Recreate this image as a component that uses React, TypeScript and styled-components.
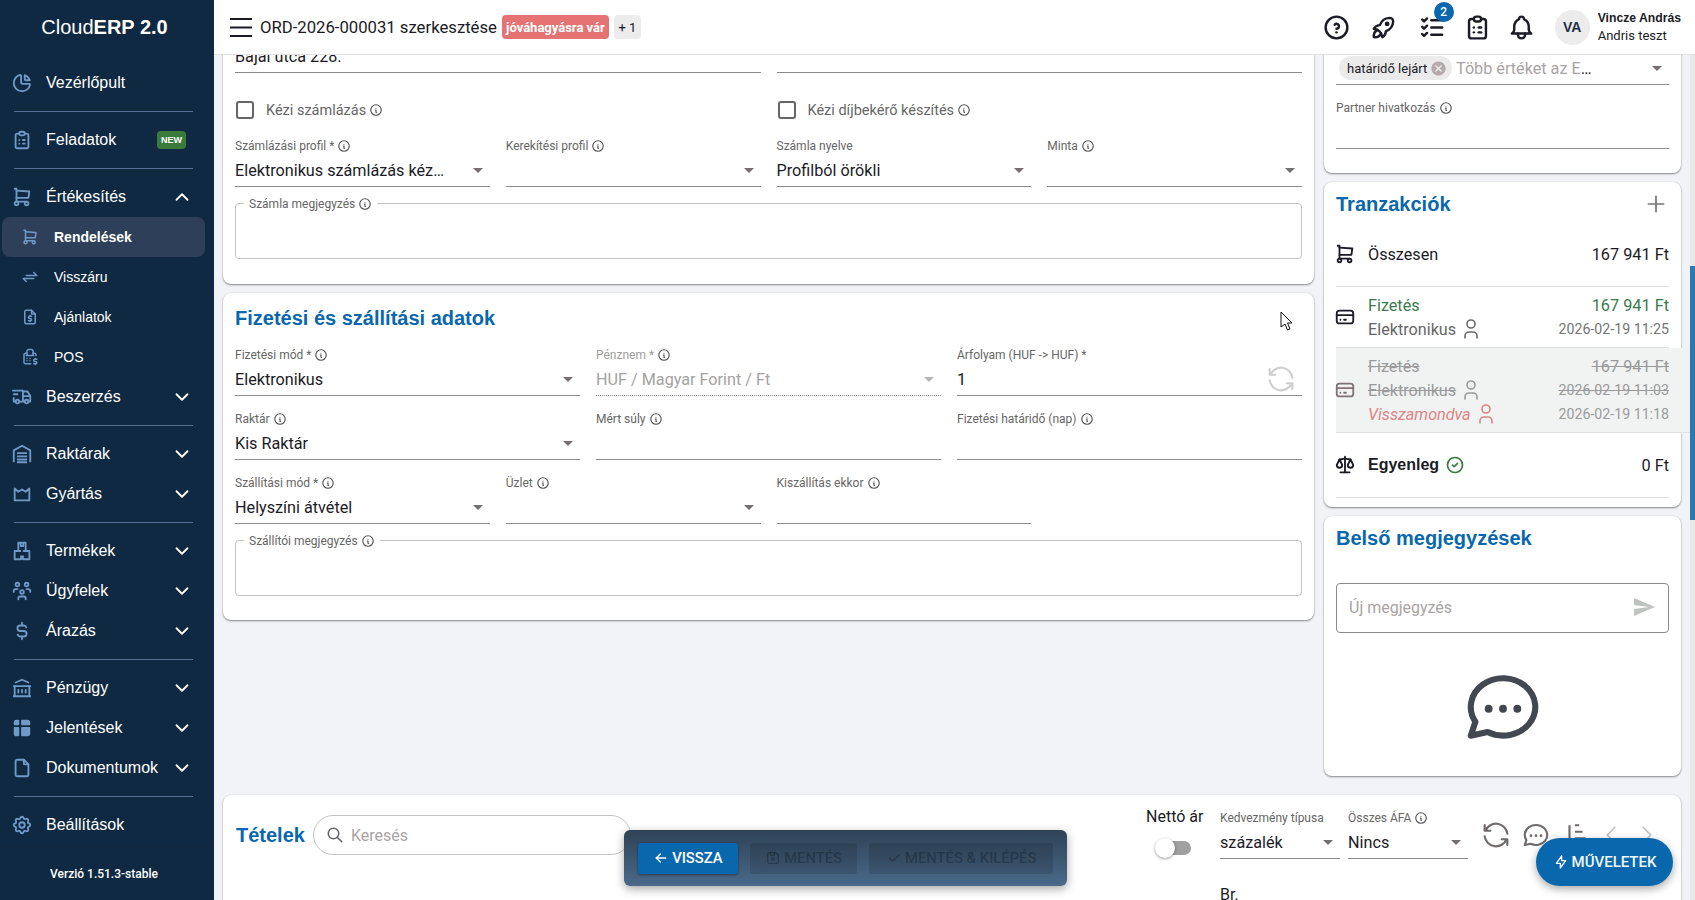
import React from 'react';
import styled, { createGlobalStyle } from 'styled-components';
import {
  TbArrowLeft,
  TbArrowsExchange,
  TbBell,
  TbBolt,
  TbBuildingBank,
  TbCashRegister,
  TbChartPie,
  TbCheck,
  TbChevronDown,
  TbChevronLeft,
  TbChevronRight,
  TbChevronUp,
  TbCircleCheck,
  TbClipboardList,
  TbCreditCard,
  TbCurrencyDollar,
  TbDeviceFloppy,
  TbFile,
  TbFileDollar,
  TbHelpCircle,
  TbInfoCircle,
  TbListCheck,
  TbPlus,
  TbRefresh,
  TbRocket,
  TbScale,
  TbSearch,
  TbSettings,
  TbShoppingCart,
  TbTableFilled,
  TbTruckDelivery,
  TbUser,
  TbUsersGroup,
} from 'react-icons/tb';

const blue = '#0867ad';
const arial = '"Liberation Sans", Arial, sans-serif';
const roboto = 'Roboto, "Liberation Sans", sans-serif';

const GlobalStyle = createGlobalStyle`
  html, body {
    margin: 0;
    height: 100%;
    overflow: hidden;
    background: #f1f3f7;
    font-family: ${roboto};
    color: #1b1b26;
  }
  * { box-sizing: border-box; }
`;

const Shell = styled.div`
  display: flex;
  width: 1695px;
  height: 900px;
  overflow: hidden;
  position: relative;
`;

/* sidebar */
const Sidebar = styled.aside`
  width: 214px;
  flex: none;
  background: #0f2942;
  color: #fff;
  font-family: ${arial};
  display: flex;
  flex-direction: column;
`;

const Logo = styled.div`
  height: 55px;
  flex: none;
  display: flex;
  align-items: center;
  justify-content: center;
  font-size: 20px;
  padding-right: 5px;
  b { font-weight: 700; }
`;

const Nav = styled.nav`
  padding-top: 8px;
  display: flex;
  flex-direction: column;
`;

const NavItem = styled.div`
  height: 40px;
  display: flex;
  align-items: center;
  padding: 0 21px 0 11px;
  font-size: 16px;
  svg:first-child {
    width: 22px;
    height: 22px;
    color: #7199c6;
    margin-right: 13px;
    flex: none;
  }
`;

const Chevron = styled.span`
  margin-left: auto;
  display: flex;
  svg:first-child {
    margin: 0;
    color: #fff;
  }
`;

const SubItem = styled.div<{ $active?: boolean }>`
  height: 40px;
  margin: 0 9px 0 2px;
  display: flex;
  align-items: center;
  padding-left: 19px;
  font-size: 14px;
  border-radius: 8px;
  font-weight: ${(p) => (p.$active ? 700 : 400)};
  background: ${(p) => (p.$active ? '#2e4059' : 'transparent')};
  svg {
    width: 18px;
    height: 18px;
    color: #7199c6;
    margin-right: 15px;
  }
`;

const NavDivider = styled.div`
  height: 1px;
  margin: 8px 21px 8px 14px;
  background: #566f95;
`;

const NewBadge = styled.span`
  margin-left: auto;
  margin-right: 7px;
  width: 29px;
  height: 18px;
  border-radius: 4px;
  background: #3a7b3d;
  font-size: 9px;
  font-weight: 700;
  display: flex;
  align-items: center;
  justify-content: center;
`;

const Version = styled.div`
  margin-top: auto;
  height: 53px;
  flex: none;
  border-top: 1px solid #11273e;
  font-family: ${roboto};
  font-size: 12px;
  font-weight: 500;
  display: flex;
  align-items: center;
  justify-content: center;
  padding-right: 6px;
`;

/* header */
const Main = styled.div`
  flex: 1;
  min-width: 0;
  display: flex;
  flex-direction: column;
`;

const Header = styled.header`
  height: 55px;
  flex: none;
  background: #fff;
  border-bottom: 1px solid #e2e2e2;
  display: flex;
  align-items: center;
  padding: 0 14px 0 16px;
  position: relative;
  z-index: 2;
`;

const PageTitle = styled.div`
  font-size: 16.7px;
  margin-left: 8px;
  white-space: nowrap;
`;

const StatusBadge = styled.span`
  margin-left: 5px;
  height: 24px;
  width: 107px;
  border-radius: 4px;
  background: #e57373;
  color: #fff;
  font-size: 13px;
  font-weight: 700;
  white-space: nowrap;
  display: flex;
  align-items: center;
  justify-content: center;
`;

const MoreBadge = styled.span`
  margin-left: 5px;
  height: 24px;
  width: 27px;
  border-radius: 4px;
  background: #ececec;
  font-size: 13px;
  display: flex;
  align-items: center;
  justify-content: center;
`;

const HeaderActions = styled.div`
  margin-left: auto;
  display: flex;
  align-items: center;
`;

const HeaderIcon = styled.div<{ $gap: number }>`
  position: relative;
  width: 26px;
  height: 26px;
  margin-left: ${(p) => p.$gap}px;
  svg {
    width: 29px;
    height: 29px;
    margin: -1.5px;
    color: #1b1b26;
    display: block;
  }
`;

const CountBadge = styled.span`
  position: absolute;
  top: -12px;
  right: -8px;
  width: 20px;
  height: 20px;
  border-radius: 50%;
  background: ${blue};
  color: #fff;
  font-size: 12px;
  font-weight: 500;
  display: flex;
  align-items: center;
  justify-content: center;
`;

const Avatar = styled.div`
  width: 35px;
  height: 35px;
  margin: 0 8px 0 20px;
  border-radius: 50%;
  background: #ececec;
  color: #1f3147;
  font-family: ${arial};
  font-size: 14px;
  font-weight: 700;
  display: flex;
  align-items: center;
  justify-content: center;
`;

const UserName = styled.div`
  font-family: ${arial};
  font-size: 12.2px;
  font-weight: 700;
  line-height: 18px;
  white-space: nowrap;
`;

const UserSub = styled.div`
  font-size: 13px;
  line-height: 18px;
  white-space: nowrap;
`;

/* content */
const Scroller = styled.div`
  flex: 1;
  min-height: 0;
  overflow: hidden;
  position: relative;
  padding: 0 14px 0 9px;
`;

const ScrollTrack = styled.div`
  position: absolute;
  top: 0;
  right: 0;
  bottom: 0;
  width: 5px;
  background: #e8e8e8;
`;

const ScrollThumb = styled.div`
  position: absolute;
  top: 211px;
  left: 0;
  width: 5px;
  height: 254px;
  background: #2e78b0;
`;

const Columns = styled.div`
  display: grid;
  grid-template-columns: 1091px 357px;
  column-gap: 10px;
  align-items: start;
  margin-top: -31px;
  height: 771px;
`;

const Column = styled.div<{ $gap: number }>`
  display: flex;
  flex-direction: column;
  gap: ${(p) => p.$gap}px;
`;

const Card = styled.section<{ $pad?: string }>`
  background: #fff;
  border-radius: 8px;
  box-shadow: 0 1px 2px rgba(0, 0, 0, 0.45), 0 0 1px rgba(0, 0, 0, 0.12);
  padding: ${(p) => p.$pad || '0 12px'};
  position: relative;
`;

const CardTitle = styled.h2<{ $mb?: number }>`
  margin: 0 0 ${(p) => p.$mb || 0}px;
  font-family: ${arial};
  font-size: 20px;
  line-height: 24px;
  font-weight: 700;
  color: ${blue};
`;

const FormGrid = styled.div<{ $cols: number; $mb?: number }>`
  display: grid;
  grid-template-columns: repeat(${(p) => p.$cols}, 1fr);
  column-gap: 16px;
  row-gap: 15px;
  margin-bottom: ${(p) => p.$mb || 0}px;
`;

const CheckRow = styled(FormGrid)`
  margin: 20px 0 11px;
  height: 34px;
`;

const CheckField = styled.label`
  display: flex;
  align-items: center;
  font-size: 14.5px;
  color: #666;
`;

const CheckBox = styled.span`
  width: 18px;
  height: 18px;
  margin: 0 12px 0 1px;
  border: 2px solid #666;
  border-radius: 3px;
`;

const FieldWrap = styled.div`
  height: 49px;
  min-width: 0;
`;

const FieldLabel = styled.div<{ $disabled?: boolean }>`
  height: 16px;
  font-size: 12px;
  line-height: 16px;
  color: ${(p) => (p.$disabled ? '#9e9e9e' : '#666')};
  display: flex;
  align-items: center;
  white-space: nowrap;
`;

const FieldValue = styled.div<{ $disabled?: boolean }>`
  height: 33px;
  display: flex;
  align-items: center;
  font-size: 16.2px;
  border-bottom: 1px ${(p) => (p.$disabled ? 'dotted #8a8a8a' : 'solid #8a8a8a')};
  color: ${(p) => (p.$disabled ? '#a3a3a3' : 'inherit')};
  white-space: nowrap;
`;

const ValueText = styled.span<{ $reserve?: number }>`
  flex: 1;
  min-width: 0;
  overflow: hidden;
  text-overflow: ellipsis;
  padding-right: ${(p) => p.$reserve || 0}px;
`;

const Caret = styled.svg<{ $disabled?: boolean }>`
  width: 24px;
  height: 24px;
  flex: none;
  fill: ${(p) => (p.$disabled ? '#b5b5b5' : '#756f6f')};
`;

const RateRefresh = styled(TbRefresh)`
  width: 34px;
  height: 34px;
  flex: none;
  color: #cfcfcf;
  margin-right: 4px;
  stroke-width: 1.5;
`;

const Info = styled(TbInfoCircle)`
  width: 14px;
  height: 14px;
  margin-left: 3px;
  color: #555;
  flex: none;
`;

const NoteBox = styled.div`
  position: relative;
  height: 56px;
  margin-top: 16px;
  border: 1px solid #c4c4c4;
  border-radius: 4px;
`;

const NoteLabel = styled.span`
  position: absolute;
  top: -8px;
  left: 8px;
  padding: 0 5px;
  height: 16px;
  background: #fff;
  font-size: 12px;
  color: #666;
  display: flex;
  align-items: center;
`;

const Chip = styled.span`
  height: 24px;
  width: 113px;
  margin: 0 4px 0 3px;
  flex: none;
  border-radius: 12px;
  background: #ebebeb;
  font-size: 13px;
  display: flex;
  align-items: center;
  padding-left: 8px;
  white-space: nowrap;
`;

const ChipClose = styled.svg`
  width: 17px;
  height: 17px;
  margin-left: 3px;
  fill: #b5abab;
`;

const Placeholder = styled.span`
  color: #a9a4a4;
`;

const TitleRow = styled.div`
  display: flex;
  align-items: center;
  justify-content: space-between;
  height: 24px;
`;

const AddIcon = styled(TbPlus)`
  width: 26px;
  height: 26px;
  color: #757575;
  stroke-width: 1.6;
`;

const TxRow = styled.div<{ $muted?: boolean }>`
  display: grid;
  grid-template-columns: 32px 1fr auto;
  align-items: center;
  grid-auto-rows: 24px;
  padding: 6px 0;
  border-bottom: 1px solid #e0e0e0;
  ${(p) =>
    p.$muted
      ? `
    margin-right: -21px;
    padding: 6px 21px 7px 0;
    background: #f1f3f3;
    border-bottom: none;
    box-shadow: inset 0 -1px 0 #e0e0e0;
  `
      : ''}
`;

const TxTotal = styled(TxRow)`
  margin-top: 4px;
  padding: 22px 0 20px;
  border-bottom: 1px solid #e0e0e0;
`;

const TxBalance = styled(TxRow)`
  padding: 20px 0;
`;

const TxIcon = styled.span<{ $rows?: number; $muted?: boolean }>`
  grid-row: span ${(p) => p.$rows || 1};
  display: flex;
  margin-left: -2px;
  color: ${(p) => (p.$muted ? '#7f7475' : '#1b1b26')};
  svg {
    width: 22px;
    height: 22px;
  }
`;

const TxLabel = styled.span<{ $tone?: string; $strike?: boolean }>`
  font-size: 16.2px;
  display: flex;
  align-items: center;
  color: ${(p) => p.$tone || 'inherit'};
  ${(p) => (p.$strike ? 'text-decoration: line-through;' : '')}
`;

const Italic = styled(TxLabel)`
  font-style: italic;
`;

const Bold = styled(TxLabel)`
  font-family: ${arial};
  font-size: 16px;
  font-weight: 700;
`;

const TxAmount = styled.span<{ $tone?: string; $strike?: boolean }>`
  grid-column: 3;
  text-align: right;
  font-size: 16.3px;
  color: ${(p) => p.$tone || 'inherit'};
  ${(p) => (p.$strike ? 'text-decoration: line-through;' : '')}
`;

const TxDate = styled(TxAmount)`
  font-size: 14.2px;
`;

const TxSecond = styled.span`
  grid-column: 2;
  display: flex;
  align-items: center;
`;

const Person = styled(TbUser)<{ $tone?: string }>`
  width: 24px;
  height: 24px;
  margin-left: 3px;
  stroke-width: 1.6;
  color: ${(p) => p.$tone || '#6a6a6a'};
`;

const BalanceOk = styled(TbCircleCheck)`
  width: 20px;
  height: 20px;
  margin-left: 6px;
  color: #3a7b3d;
`;

const NoteInput = styled.div`
  height: 50px;
  margin-top: 33px;
  border: 1px solid #8a8a8a;
  border-radius: 4px;
  display: flex;
  align-items: center;
  justify-content: space-between;
  padding: 0 12px 2px;
  font-size: 16px;
  color: #a9a4a4;
`;

const SendIcon = styled.svg`
  width: 24px;
  height: 24px;
  fill: #bfc4c0;
`;

const EmptyNotes = styled.div`
  display: flex;
  justify-content: center;
  margin-top: 31px;
  color: #434750;
  svg {
    width: 86px;
    height: 86px;
  }
`;

/* items */
const ItemsBar = styled.div`
  display: flex;
  align-items: flex-start;
`;

const ItemsTitle = styled(CardTitle)`
  margin-top: 5px;
  line-height: 40px;
`;

const SearchBox = styled.div`
  width: 318px;
  height: 40px;
  margin: 5px 0 0 8px;
  border: 1px solid #c4c4c4;
  border-radius: 20px;
  display: flex;
  align-items: center;
  padding-left: 12px;
  font-size: 16px;
  color: #a9a4a4;
  svg {
    width: 18px;
    height: 18px;
    color: #666;
    margin-right: 7px;
  }
`;

const ItemsControls = styled.div`
  margin-left: auto;
  display: flex;
  align-items: flex-start;
`;

const NetToggle = styled.div`
  width: 58px;
  margin-right: 16px;
  font-size: 16px;
  line-height: 18px;
  white-space: nowrap;
  margin-top: -2px;
`;

const SwitchTrack = styled.div`
  position: relative;
  width: 26px;
  height: 14px;
  margin: 15px 0 0 19px;
  border-radius: 7px;
  background: #a0a0a0;
`;

const SwitchThumb = styled.span`
  position: absolute;
  top: -3px;
  left: -10px;
  width: 20px;
  height: 20px;
  border-radius: 50%;
  background: #fff;
  box-shadow: 0 1px 3px rgba(0, 0, 0, 0.4);
`;

const SmallField = styled(FieldWrap)`
  width: 120px;
  & + & {
    margin-left: 8px;
  }
`;

const ToolIcons = styled.div`
  display: flex;
  gap: 14px;
  margin: 12px 0 0 15px;
  color: #706a6a;
  svg {
    width: 26px;
    height: 26px;
    display: block;
  }
`;

const ToolRefresh = styled(TbRefresh)`
  && {
    width: 34px;
    height: 34px;
    margin: -4px;
    stroke-width: 1.5;
  }
`;

const ToolChat = styled.span`
  display: block;
  width: 26px;
  height: 26px;
  svg {
    width: 30px;
    height: 30px;
    margin: -2px;
  }
`;

const PagerIcons = styled.div`
  display: flex;
  gap: 10px;
  margin: 12px 21px 0 9px;
  color: #c0c0c0;
  svg {
    width: 30px;
    height: 30px;
    margin: -2px;
    display: block;
    stroke-width: 1.4;
  }
`;

const TableHead = styled.div`
  display: grid;
  grid-template-columns: 984px 1fr;
  margin-top: 27px;
  padding-bottom: 40px;
  font-size: 16px;
  line-height: 18px;
`;

/* floating */
const ActionBar = styled.div`
  position: absolute;
  left: 624px;
  top: 830px;
  width: 443px;
  height: 56px;
  border-radius: 6px;
  background: linear-gradient(180deg, #2f4256, #4a6a8a);
  box-shadow: 0 3px 10px rgba(0, 0, 0, 0.35);
  display: flex;
  align-items: center;
  gap: 12px;
  padding: 0 14px;
  z-index: 3;
`;

const BarButton = styled.div<{ $primary?: boolean; $w: number }>`
  width: ${(p) => p.$w}px;
  height: 31px;
  border-radius: 3px;
  display: flex;
  align-items: center;
  justify-content: center;
  gap: 3px;
  font-size: 14.8px;
  font-weight: 500;
  white-space: nowrap;
  color: ${(p) => (p.$primary ? '#fff' : 'rgba(0,0,0,0.26)')};
  background: ${(p) => (p.$primary ? blue : 'rgba(0,0,0,0.12)')};
  box-shadow: ${(p) => (p.$primary ? '0 1px 3px rgba(0,0,0,0.4)' : 'none')};
  svg {
    width: 16px;
    height: 16px;
  }
`;

const Fab = styled.div`
  position: absolute;
  left: 1536px;
  top: 838px;
  width: 137px;
  height: 48px;
  border-radius: 24px;
  background: ${blue};
  color: #f1f6fa;
  box-shadow: 0 3px 8px rgba(0, 0, 0, 0.35);
  display: flex;
  align-items: center;
  justify-content: center;
  gap: 3px;
  font-size: 15px;
  font-weight: 500;
  z-index: 3;
  svg {
    width: 16px;
    height: 16px;
  }
`;

const Cursor = styled.svg`
  position: absolute;
  left: 1280px;
  top: 311px;
  width: 14px;
  height: 20px;
  z-index: 3;
`;

const caretPath = 'M7 10l5 5 5-5z';

const ChatIcon = () => (
  <svg viewBox="0 0 24 24" fill="none" stroke="currentColor" strokeWidth="1.7" strokeLinecap="round" strokeLinejoin="round">
    <path d="M3 20l1.3-3.9C1.976 12.663 2.874 8.228 6.4 5.726c3.526-2.501 8.59-2.296 11.845.48 3.255 2.777 3.695 7.266 1.029 10.501C16.608 19.942 11.659 20.922 7.7 19L3 20" />
    <path d="M8 12.5v.01M12 12.5v.01M16 12.5v.01" strokeWidth="2.2" />
  </svg>
);

const WarehouseIcon = () => (
  <svg viewBox="0 0 24 24" fill="none" stroke="currentColor" strokeWidth="2" strokeLinejoin="round">
    <path d="M3 21V8l9-5 9 5v13" />
    <path d="M6.5 11h11M6.5 14.5h11M6.5 18h11M6.5 21h11" />
  </svg>
);

const FactoryIcon = () => (
  <svg viewBox="0 0 24 24" fill="none" stroke="currentColor" strokeWidth="2" strokeLinejoin="round">
    <path d="M4 19V6l4 3.5L12 7l4 2.5L20 6v13z" />
  </svg>
);

const BoxesIcon = () => (
  <svg viewBox="0 0 24 24" fill="none" stroke="currentColor" strokeWidth="2" strokeLinejoin="round">
    <path d="M8 11V3h8v8" />
    <path d="M10.5 3v3.5h3V3" />
    <path d="M11 12H4v9h7v-4" />
    <path d="M13 12h7v9h-7v-4" />
  </svg>
);

type FieldProps = {
  label: string;
  value?: string;
  info?: boolean;
  select?: boolean;
  disabled?: boolean;
  children?: React.ReactNode;
};

const Field = ({ label, value, info, select, disabled, children }: FieldProps) => (
  <FieldWrap>
    <FieldLabel $disabled={disabled}>
      {label}
      {info && <Info />}
    </FieldLabel>
    <FieldValue $disabled={disabled}>
      <ValueText $reserve={select ? 20 : 0}>{value}</ValueText>
      {children}
      {select && (
        <Caret $disabled={disabled} viewBox="0 0 24 24">
          <path d={caretPath} />
        </Caret>
      )}
    </FieldValue>
  </FieldWrap>
);

const Group = ({ icon, label }: { icon: React.ReactNode; label: string }) => (
  <NavItem>
    {icon}
    {label}
    <Chevron>
      <TbChevronDown />
    </Chevron>
  </NavItem>
);

const SideNav = () => (
  <Sidebar>
    <Logo>
      <span>
        Cloud<b>ERP 2.0</b>
      </span>
    </Logo>
    <Nav>
      <NavItem>
        <TbChartPie />
        Vezérlőpult
      </NavItem>
      <NavDivider />
      <NavItem>
        <TbClipboardList />
        Feladatok
        <NewBadge>NEW</NewBadge>
      </NavItem>
      <NavDivider />
      <NavItem>
        <TbShoppingCart />
        Értékesítés
        <Chevron>
          <TbChevronUp />
        </Chevron>
      </NavItem>
      <SubItem $active>
        <TbShoppingCart />
        Rendelések
      </SubItem>
      <SubItem>
        <TbArrowsExchange />
        Visszáru
      </SubItem>
      <SubItem>
        <TbFileDollar />
        Ajánlatok
      </SubItem>
      <SubItem>
        <TbCashRegister />
        POS
      </SubItem>
      <Group icon={<TbTruckDelivery />} label="Beszerzés" />
      <NavDivider />
      <Group icon={<WarehouseIcon />} label="Raktárak" />
      <Group icon={<FactoryIcon />} label="Gyártás" />
      <NavDivider />
      <Group icon={<BoxesIcon />} label="Termékek" />
      <Group icon={<TbUsersGroup />} label="Ügyfelek" />
      <Group icon={<TbCurrencyDollar />} label="Árazás" />
      <NavDivider />
      <Group icon={<TbBuildingBank />} label="Pénzügy" />
      <Group icon={<TbTableFilled />} label="Jelentések" />
      <Group icon={<TbFile />} label="Dokumentumok" />
      <NavDivider />
      <NavItem>
        <TbSettings />
        Beállítások
      </NavItem>
    </Nav>
    <Version>Verzió 1.51.3-stable</Version>
  </Sidebar>
);

const TopBar = () => (
  <Header>
    <svg width="22" height="19" viewBox="0 0 22 19" aria-hidden>
      <path d="M0 1h22M0 9.5h22M0 18h22" stroke="#1b1b26" strokeWidth="2" />
    </svg>
    <PageTitle>ORD-2026-000031 szerkesztése</PageTitle>
    <StatusBadge>jóváhagyásra vár</StatusBadge>
    <MoreBadge>+ 1</MoreBadge>
    <HeaderActions>
      <HeaderIcon $gap={0}>
        <TbHelpCircle />
      </HeaderIcon>
      <HeaderIcon $gap={21}>
        <TbRocket />
      </HeaderIcon>
      <HeaderIcon $gap={23}>
        <TbListCheck />
        <CountBadge>2</CountBadge>
      </HeaderIcon>
      <HeaderIcon $gap={19}>
        <TbClipboardList />
      </HeaderIcon>
      <HeaderIcon $gap={18}>
        <TbBell />
      </HeaderIcon>
      <Avatar>VA</Avatar>
      <div>
        <UserName>Vincze András</UserName>
        <UserSub>Andris teszt</UserSub>
      </div>
    </HeaderActions>
  </Header>
);

const InvoiceCard = () => (
  <Card $pad="0 12px 25px">
    <FormGrid $cols={2}>
      <Field label="Cím" value="Bajai utca 228." />
      <Field label="Adószám" />
    </FormGrid>
    <CheckRow $cols={2}>
      <CheckField>
        <CheckBox />
        Kézi számlázás
        <Info />
      </CheckField>
      <CheckField>
        <CheckBox />
        Kézi díjbekérő készítés
        <Info />
      </CheckField>
    </CheckRow>
    <FormGrid $cols={4}>
      <Field label="Számlázási profil *" value="Elektronikus számlázás kézi jóváhagyással" info select />
      <Field label="Kerekítési profil" info select />
      <Field label="Számla nyelve" value="Profilból örökli" select />
      <Field label="Minta" info select />
    </FormGrid>
    <NoteBox>
      <NoteLabel>
        Számla megjegyzés
        <Info />
      </NoteLabel>
    </NoteBox>
  </Card>
);

const PaymentCard = () => (
  <Card $pad="13px 12px 24px">
    <CardTitle $mb={17}>Fizetési és szállítási adatok</CardTitle>
    <FormGrid $cols={3} $mb={15}>
      <Field label="Fizetési mód *" value="Elektronikus" info select />
      <Field label="Pénznem *" value="HUF / Magyar Forint / Ft" info select disabled />
      <Field label="Árfolyam (HUF -> HUF) *" value="1">
        <RateRefresh />
      </Field>
      <Field label="Raktár" value="Kis Raktár" info select />
      <Field label="Mért súly" info />
      <Field label="Fizetési határidő (nap)" info />
    </FormGrid>
    <FormGrid $cols={4}>
      <Field label="Szállítási mód *" value="Helyszíni átvétel" info select />
      <Field label="Üzlet" info select />
      <Field label="Kiszállítás ekkor" info />
    </FormGrid>
    <NoteBox>
      <NoteLabel>
        Szállítói megjegyzés
        <Info />
      </NoteLabel>
    </NoteBox>
  </Card>
);

const PartnerCard = () => (
  <Card $pad="12px 12px 24px">
    <FormGrid $cols={1}>
      <FieldWrap>
        <FieldLabel>Címkék</FieldLabel>
        <FieldValue>
          <Chip>
            határidő lejárt
            <ChipClose viewBox="0 0 24 24">
              <path d="M12 2C6.47 2 2 6.47 2 12s4.47 10 10 10 10-4.47 10-10S17.53 2 12 2zm5 13.59L15.59 17 12 13.41 8.41 17 7 15.59 10.59 12 7 8.41 8.41 7 12 10.59 15.59 7 17 8.41 13.41 12 17 15.59z" />
            </ChipClose>
          </Chip>
          <ValueText $reserve={45}>
            <Placeholder>Több értéket az Enter lenyomásával</Placeholder>
          </ValueText>
          <Caret viewBox="0 0 24 24">
            <path d={caretPath} />
          </Caret>
        </FieldValue>
      </FieldWrap>
      <Field label="Partner hivatkozás" info />
    </FormGrid>
  </Card>
);

const TransactionsCard = () => (
  <Card $pad="10px 12px 9px">
    <TitleRow>
      <CardTitle>Tranzakciók</CardTitle>
      <AddIcon />
    </TitleRow>
    <TxTotal>
      <TxIcon>
        <TbShoppingCart />
      </TxIcon>
      <TxLabel>Összesen</TxLabel>
      <TxAmount>167 941 Ft</TxAmount>
    </TxTotal>
    <TxRow>
      <TxIcon $rows={2}>
        <TbCreditCard />
      </TxIcon>
      <TxLabel $tone="#3b7a4a">Fizetés</TxLabel>
      <TxAmount $tone="#3b7a4a">167 941 Ft</TxAmount>
      <TxSecond>
        <TxLabel $tone="#666">Elektronikus</TxLabel>
        <Person />
      </TxSecond>
      <TxDate $tone="#757575">2026-02-19 11:25</TxDate>
    </TxRow>
    <TxRow $muted>
      <TxIcon $rows={3} $muted>
        <TbCreditCard />
      </TxIcon>
      <TxLabel $tone="#9a9a9a" $strike>
        Fizetés
      </TxLabel>
      <TxAmount $tone="#9a9a9a" $strike>
        167 941 Ft
      </TxAmount>
      <TxSecond>
        <TxLabel $tone="#9a9a9a" $strike>
          Elektronikus
        </TxLabel>
        <Person $tone="#9a9a9a" />
      </TxSecond>
      <TxDate $tone="#9a9a9a" $strike>
        2026-02-19 11:03
      </TxDate>
      <TxSecond>
        <Italic $tone="#dd8484">Visszamondva</Italic>
        <Person $tone="#dd8484" />
      </TxSecond>
      <TxDate $tone="#9a9a9a">2026-02-19 11:18</TxDate>
    </TxRow>
    <TxBalance>
      <TxIcon>
        <TbScale />
      </TxIcon>
      <TxSecond>
        <Bold>Egyenleg</Bold>
        <BalanceOk />
      </TxSecond>
      <TxAmount>0 Ft</TxAmount>
    </TxBalance>
  </Card>
);

const NotesCard = () => (
  <Card $pad="10px 12px 26px">
    <CardTitle>Belső megjegyzések</CardTitle>
    <NoteInput>
      Új megjegyzés
      <SendIcon viewBox="0 0 24 24">
        <path d="M2.01 21 23 12 2.01 3 2 10l15 2-15 2z" />
      </SendIcon>
    </NoteInput>
    <EmptyNotes>
      <ChatIcon />
    </EmptyNotes>
  </Card>
);

const ItemsCard = () => (
  <Card $pad="15px 0 0 13px">
    <ItemsBar>
      <ItemsTitle>Tételek</ItemsTitle>
      <SearchBox>
        <TbSearch />
        Keresés
      </SearchBox>
      <ItemsControls>
        <NetToggle>
          Nettó ár
          <SwitchTrack>
            <SwitchThumb />
          </SwitchTrack>
        </NetToggle>
        <SmallField>
          <FieldLabel>Kedvezmény típusa</FieldLabel>
          <FieldValue>
            <ValueText>százalék</ValueText>
            <Caret viewBox="0 0 24 24">
              <path d={caretPath} />
            </Caret>
          </FieldValue>
        </SmallField>
        <SmallField>
          <FieldLabel>
            Összes ÁFA
            <Info />
          </FieldLabel>
          <FieldValue>
            <ValueText>Nincs</ValueText>
            <Caret viewBox="0 0 24 24">
              <path d={caretPath} />
            </Caret>
          </FieldValue>
        </SmallField>
        <ToolIcons>
          <ToolRefresh />
          <ToolChat>
            <ChatIcon />
          </ToolChat>
          <svg viewBox="0 0 24 24" fill="none" stroke="currentColor" strokeWidth="2">
            <path d="M6 3v18M2 21h4M11 3h4M11 9h7M11 15h10" />
          </svg>
        </ToolIcons>
        <PagerIcons>
          <TbChevronLeft />
          <TbChevronRight />
        </PagerIcons>
      </ItemsControls>
    </ItemsBar>
    <TableHead>
      <span />
      <span>Br.</span>
    </TableHead>
  </Card>
);

export default function App() {
  return (
    <>
      <GlobalStyle />
      <Shell>
        <SideNav />
        <Main>
          <TopBar />
          <Scroller>
            <Columns>
              <Column $gap={9}>
                <InvoiceCard />
                <PaymentCard />
              </Column>
              <Column $gap={9}>
                <PartnerCard />
                <TransactionsCard />
                <NotesCard />
              </Column>
            </Columns>
            <ItemsCard />
            <ScrollTrack>
              <ScrollThumb />
            </ScrollTrack>
          </Scroller>
        </Main>
        <ActionBar>
          <BarButton $primary $w={100}>
            <TbArrowLeft />
            VISSZA
          </BarButton>
          <BarButton $w={108}>
            <TbDeviceFloppy />
            MENTÉS
          </BarButton>
          <BarButton $w={184}>
            <TbCheck />
            MENTÉS &amp; KILÉPÉS
          </BarButton>
        </ActionBar>
        <Fab>
          <TbBolt />
          MŰVELETEK
        </Fab>
        <Cursor viewBox="0 0 14 20">
          <path d="M1 1v15l4-3 2.5 6 2.5-1-2.5-6H12z" fill="#fff" stroke="#111" strokeWidth="1" />
        </Cursor>
      </Shell>
    </>
  );
}
